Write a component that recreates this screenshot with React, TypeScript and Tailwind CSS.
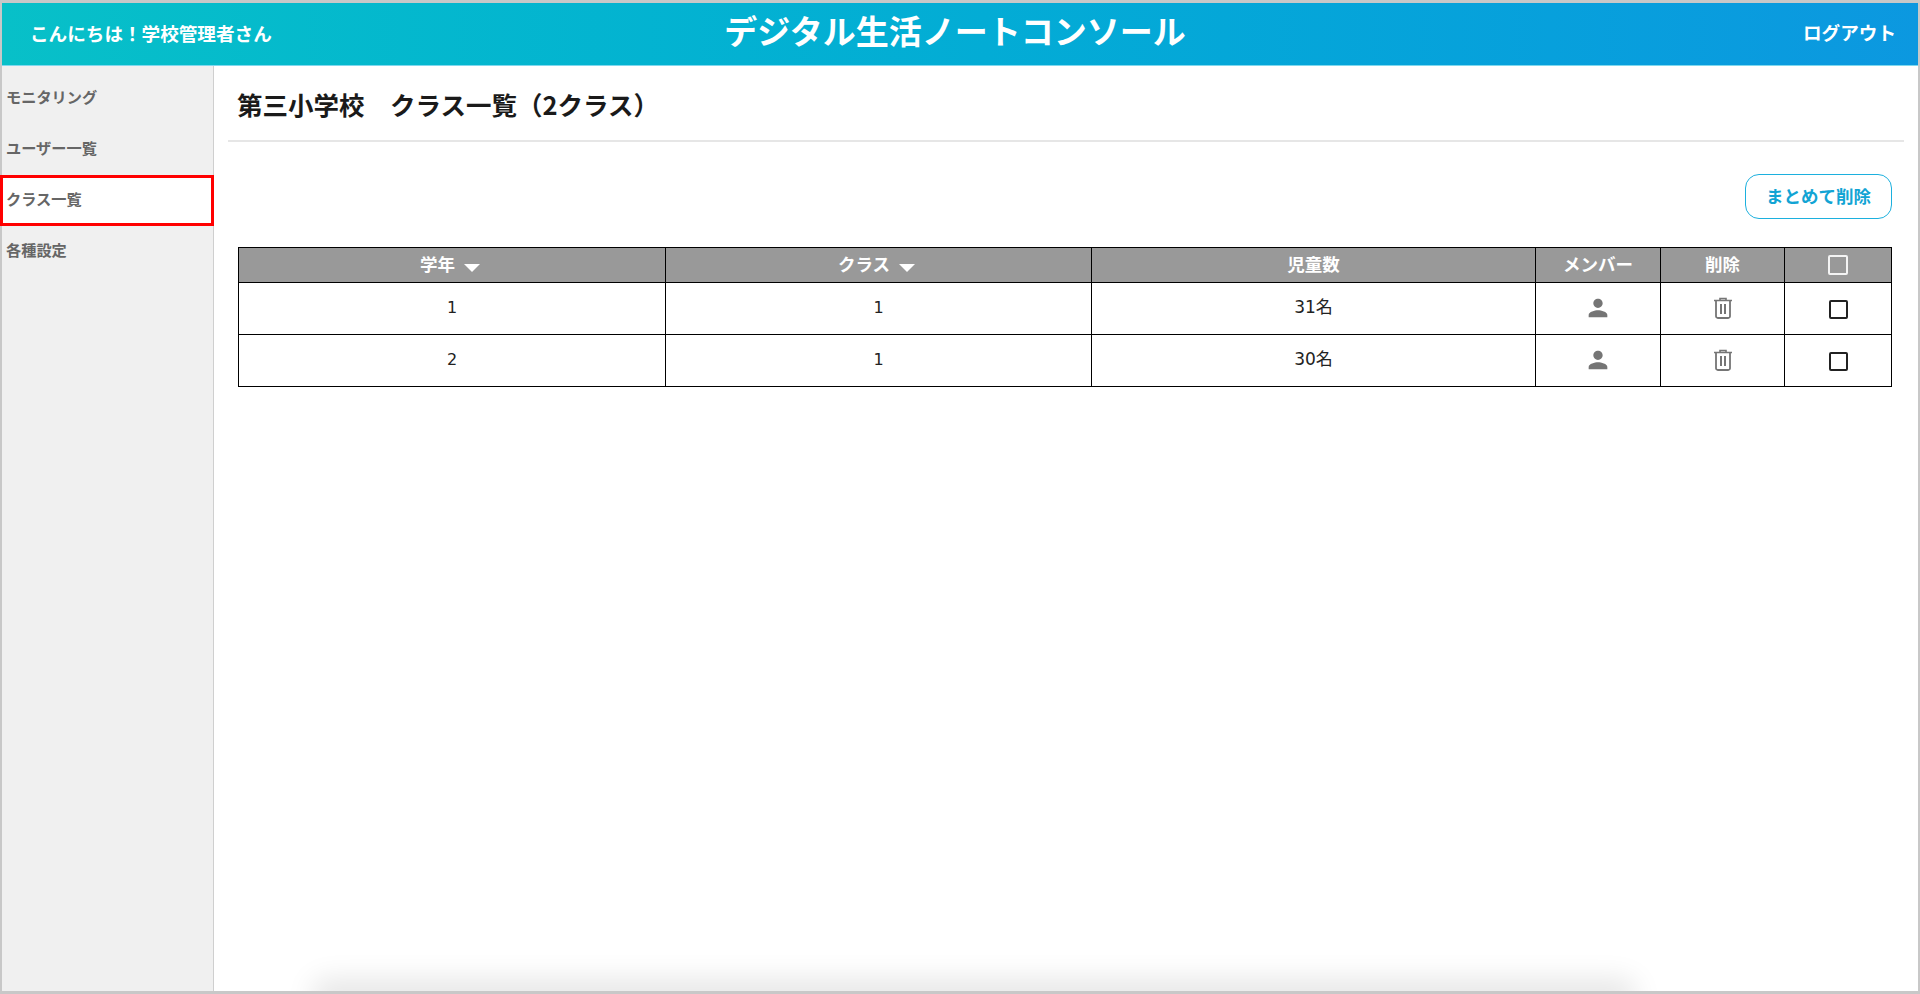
const font = { fontFamily: '"Noto Sans CJK JP", sans-serif' };
const numFont = { fontFamily: '"DejaVu Sans", "Noto Sans CJK JP", sans-serif' };

const navItems = ["モニタリング", "ユーザー一覧", "クラス一覧", "各種設定"];

const rows = [
  { grade: "1", klass: "1", count: "31名" },
  { grade: "2", klass: "1", count: "30名" },
];

function SortArrow() {
  return <span className="ml-[9px] inline-block h-0 w-0 translate-y-[1px] border-x-[8px] border-t-[8px] border-x-transparent border-t-white" />;
}

function CheckBox({ white }: { white?: boolean }) {
  return (
    <span
      className={
        white
          ? "mx-auto block h-[20px] w-[20px] rounded-[2px] border-2 border-[#f4f4f4]"
          : "mx-auto block h-[19px] w-[19px] translate-y-[1px] rounded-[2px] border-2 border-[#222]"
      }
    />
  );
}

function PersonIcon() {
  return (
    <svg viewBox="0 0 24 24" className="mx-auto h-[28px] w-[28px] -translate-y-[1px] fill-[#757575]">
      <path d="M12 12c2.21 0 4-1.79 4-4s-1.79-4-4-4-4 1.79-4 4 1.79 4 4 4zm0 2c-2.67 0-8 1.34-8 4v2h16v-2c0-2.66-5.33-4-8-4z" />
    </svg>
  );
}

function TrashIcon() {
  return (
    <svg viewBox="0 0 20 22" className="mx-auto h-[22px] w-[20px] -translate-y-[1px] fill-none stroke-[#757575]">
      <path d="M1 3.5h18M7 3V1.5h6V3" strokeWidth="1.6" />
      <path d="M3 4v15.2a1.8 1.8 0 0 0 1.8 1.8h10.4a1.8 1.8 0 0 0 1.8-1.8V4" strokeWidth="1.8" />
      <path d="M8 7v10M12 7v10" strokeWidth="2" />
    </svg>
  );
}

export default function App() {
  return (
    <div className="flex h-[994px] w-full flex-col overflow-hidden bg-[#c8c8c8] px-[2px] pb-[3px] pt-[3px]" style={font}>
      {/* Header */}
      <header className="flex h-[63px] shrink-0 items-center justify-between border-b border-[#7fd8ee] bg-gradient-to-r from-[#08c0c8] to-[#0c98e0] pb-[4px] pl-[28px] pr-[22px] text-white">
        <div className="w-[300px] translate-y-[1px] text-[18.6px] font-bold">こんにちは！学校管理者さん</div>
        <h1 className="-translate-x-[8px] -translate-y-[2px] text-[33px] font-bold leading-none">デジタル生活ノートコンソール</h1>
        <div className="w-[300px] text-right text-[18.6px] font-bold">ログアウト</div>
      </header>

      <div className="flex min-h-0 flex-1 bg-white">
        {/* Sidebar */}
        <aside className="w-[212px] shrink-0 border-r border-[#cfcfcf] bg-[#f0f0f0] pt-[7px]">
          <nav className="flex flex-col">
            {navItems.map((item) =>
              item === "クラス一覧" ? (
                <div
                  key={item}
                  className="-ml-[2px] -mr-[1px] flex h-[51px] items-center border-[3px] border-[#ff0000] bg-white pb-[5px] pl-[3px] text-[15.2px] font-bold text-[#666]"
                >
                  {item}
                </div>
              ) : (
                <div key={item} className="flex h-[51px] items-center pb-[5px] pl-[4px] text-[15.2px] font-bold text-[#666]">
                  {item}
                </div>
              ),
            )}
          </nav>
        </aside>

        {/* Main */}
        <main className="relative min-w-0 flex-1 overflow-hidden pl-[14px] pr-[14px]">
          <div className="border-b-2 border-[#e6e6e6] pb-[18px] pl-[9px] pt-[20px]">
            <h2 className="text-[25.5px] font-bold leading-[36px] text-[#1a1a1a]">第三小学校　クラス一覧（2クラス）</h2>
          </div>

          <div className="pl-[10px]">
            <div className="flex w-[1654px] justify-end pt-[32px]">
              <button className="h-[45px] w-[147px] rounded-[14px] border-[1.5px] border-[#1cb0de] bg-white text-[17.5px] font-bold text-[#12a4d4]">
                まとめて削除
              </button>
            </div>

            <table className="mt-[28px] w-[1653px] table-fixed border-collapse border border-black text-center text-[16px] text-[#222]">
              <colgroup>
                <col className="w-[427px]" />
                <col className="w-[426px]" />
                <col className="w-[444px]" />
                <col className="w-[125px]" />
                <col className="w-[124px]" />
                <col className="w-[107px]" />
              </colgroup>
              <thead>
                <tr className="h-[35px] bg-[#999] text-white">
                  <th className="border border-black pb-[2px] pr-[4px] text-[17.5px] font-bold">学年<SortArrow /></th>
                  <th className="border border-black pb-[2px] pr-[4px] text-[17.5px] font-bold">クラス<SortArrow /></th>
                  <th className="border border-black pb-[2px] text-[17.5px] font-bold">児童数</th>
                  <th className="border border-black pb-[2px] text-[17.5px] font-bold">メンバー</th>
                  <th className="border border-black pb-[2px] text-[17.5px] font-bold">削除</th>
                  <th className="border border-black"><CheckBox white /></th>
                </tr>
              </thead>
              <tbody>
                {rows.map((row) => (
                  <tr key={row.grade} className="h-[52px]">
                    <td className="border border-black pb-[2px]" style={numFont}>{row.grade}</td>
                    <td className="border border-black pb-[2px]" style={numFont}>{row.klass}</td>
                    <td className="border border-black pb-[2px] text-[17px]" style={numFont}>{row.count}</td>
                    <td className="border border-black"><PersonIcon /></td>
                    <td className="border border-black"><TrashIcon /></td>
                    <td className="border border-black"><CheckBox /></td>
                  </tr>
                ))}
              </tbody>
            </table>
          </div>

          {/* faint shadow along the bottom edge */}
          <div className="absolute -bottom-[10px] left-[110px] h-[10px] w-[1300px] rounded-[10px] shadow-[0_0_28px_12px_rgba(0,0,0,0.1)]" />
        </main>
      </div>
    </div>
  );
}
